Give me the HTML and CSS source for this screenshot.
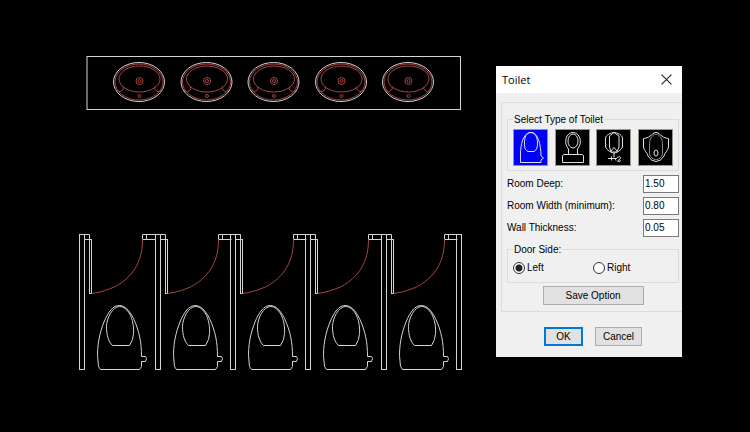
FILE: index.html
```html
<!DOCTYPE html>
<html lang="en">
<head>
<meta charset="utf-8">
<title>Toilet</title>
<link rel="stylesheet" href="styles.css">
</head>
<body>
<main class="workspace">
  <svg class="drawing" viewBox="0 0 488 432" role="img" aria-label="Floor plan">
    <defs>
      <g id="basin">
        <ellipse cx="0" cy="0" rx="25.5" ry="19.5"/>
        <g class="red">
          <ellipse cx="0" cy="0" rx="24" ry="18"/>
          <ellipse cx="0.5" cy="-3" rx="20.5" ry="13"/>
          <path d="M-24 6.500Q-20 11 -17.500 9Q-14.500 7 -16 4.500M24 6.500Q20 11 17.500 9Q14.500 7 16 4.500"/>
          <circle cx="0.5" cy="-1" r="3.500"/>
          <circle cx="0.5" cy="-1" r="1.500"/>
          <circle cx="0.5" cy="14" r="1.500"/>
        </g>
      </g>
      <g id="wall"><rect x="0" y="0" width="5" height="135"/></g>
      <g id="stall">
        <use href="#wall"/>
        <path d="M5 0H10V5H5M63 0H76M63 5H76M63 0V5M67 0V5"/>
        <rect x="10" y="5" width="2" height="54"/>
        <path class="red" d="M12 59C21 58 29 55 36 52C52 43 63 29 63 5"/>
        <path d="M18 121C18 105 22 93 26 84C31 74 35 71 40 71C45 71 50 76 54 84C60 97 62 108 62 122H66L67 124L66 127H62V132L60 135H21L19 132Z"/>
        <path d="M40 72C33 72 27 84 27 92C27 101 29 107 33 111H50Q54 105 54 99C55 84 48 72 40 72Z"/>
      </g>
    </defs>
    <rect x="87" y="56.500" width="373.500" height="53"/>
    <use href="#basin" x="139" y="82"/>
    <use href="#basin" x="206.500" y="82"/>
    <use href="#basin" x="273.500" y="82"/>
    <use href="#basin" x="341" y="82"/>
    <use href="#basin" x="408" y="82"/>
    <use href="#stall" x="79.500" y="234.500"/>
    <use href="#stall" x="155.500" y="234.500"/>
    <use href="#stall" x="230.500" y="234.500"/>
    <use href="#stall" x="305.500" y="234.500"/>
    <use href="#stall" x="381.500" y="234.500"/>
    <use href="#wall" x="456.500" y="234.500"/>
  </svg>

  <form class="dialog" aria-labelledby="dialog-title">
    <header class="titlebar">
      <h1 id="dialog-title">Toilet</h1>
      <button class="close" type="button" aria-label="Close">
        <svg viewBox="0 0 10 10"><path d="M.5 .5L9.500 9.500M9.500 .5L.5 9.500"/></svg>
      </button>
    </header>

    <div class="panel">
      <fieldset class="types">
        <legend>Select Type of Toilet</legend>
        <div class="tiles">
          <button class="tile selected" type="button" aria-label="Toilet with side handle">
            <svg viewBox="0 0 33 35"><path d="M6.500 32.500V24C6.500 15 9 2.500 17 2.500C24 2.500 27 15 27 26L29.500 28L27 30V32.500Z"/><path d="M17 2.500C12 2.500 10.500 7 10.500 13C10.500 18 11 20 14 21.500H20C23 20 23.500 17 23.500 13C23.500 7 21 2.500 17 2.500Z"/></svg>
          </button>
          <button class="tile" type="button" aria-label="Toilet with tank">
            <svg viewBox="0 0 33 35"><path d="M6.500 32.500V25.500L8 24.500H26L27.500 25.500V32.500Z"/><path d="M12.500 24.500V19C7 13 10 2.500 17 2.500C24 2.500 27 13 21.500 19V24.500"/><ellipse cx="17" cy="11" rx="5" ry="7"/></svg>
          </button>
          <button class="tile" type="button" aria-label="Wall urinal">
            <svg viewBox="0 0 33 35"><path d="M17 2.500C20 2.500 25 5 25.500 8V17C24 20 20 23 17 23C14 23 10 20 8.500 17V8C9 5 14 2.500 17 2.500Z"/><path d="M17 2.500L12.500 6V17L14 22H20L22 17V6ZM14 21L17 17.500L20 21M17 23V27.500M11 28.500H20M14.500 26.500V30.500M17.500 28L19 30.500M20 27.500Q24 25.500 23.500 28.500L20.500 31Q23 33 23.500 30"/></svg>
          </button>
          <button class="tile" type="button" aria-label="Shield urinal">
            <svg viewBox="0 0 33 35"><path d="M17 2.500C14 2.500 13 5 11 6C9 8 7 8 4.500 8.500V17C5 21 8 22 9 26Q12 31.500 17 31.500T25 26C26 22 29 21 29.500 17V8.500C27 8 25 8 23 6C21 5 20 2.500 17 2.500Z"/><path class="dim" d="M17 4C12 5 10.500 10 10.500 15V24Q12 29.500 17 29.500T23.500 24V15C23.500 10 22 5 17 4Z"/><ellipse cx="17" cy="23" rx="2" ry="3"/></svg>
          </button>
        </div>
      </fieldset>

      <div class="fields">
        <label for="deep">Room Deep:</label><input id="deep" type="text" value="1.50">
        <label for="width">Room Width (minimum):</label><input id="width" type="text" value="0.80">
        <label for="thickness">Wall Thickness:</label><input id="thickness" type="text" value="0.05">
      </div>

      <fieldset class="side">
        <legend>Door Side:</legend>
        <div class="choices">
          <label><input type="radio" name="side" checked>Left</label>
          <label><input type="radio" name="side">Right</label>
        </div>
      </fieldset>

      <button class="button save" type="button">Save Option</button>
    </div>

    <footer class="actions">
      <button class="button ok" type="submit">OK</button>
      <button class="button cancel" type="button">Cancel</button>
    </footer>
  </form>
</main>
</body>
</html>
```
FILE: styles.css
```css
* { box-sizing: border-box; }

body {
  margin: 0;
  background: #000;
  color: #000;
  font: 10px/13px "Liberation Sans", Arial, sans-serif;
}

button, input { font: inherit; color: inherit; }

.workspace {
  display: flex;
  align-items: flex-start;
  gap: 8px;
  padding-right: 68px;
  min-height: 100vh;
}

.drawing {
  flex: 1;
  min-width: 0;
  fill: none;
  stroke: #d4d4d4;
  stroke-width: 1;
}

.drawing .red { stroke: #a34545; }

.dialog {
  flex: none;
  width: 186px;
  margin-top: 66px;
  padding-bottom: 11px;
  background: #f0f0f0;
}

.titlebar {
  display: flex;
  align-items: center;
  justify-content: space-between;
  height: 27px;
  padding: 0 10px 0 6px;
  background: #fff;
}

.titlebar h1 {
  margin: 0;
  font: 11px/16px "Open Sans", "Noto Sans", sans-serif;
}

.close {
  width: 11px;
  height: 11px;
  padding: 0;
  border: 0;
  background: none;
}

.close svg { display: block; width: 100%; fill: none; stroke: #222; }

.panel {
  margin: 9px 0 0 5px;
  padding: 10px 3px 6px 5px;
  border: 1px solid #dcdcdc;
  border-right: 0;
}

fieldset {
  min-width: 0;
  margin: 0;
  padding: 0 5px;
  border: 1px solid #dcdcdc;
}

legend { padding: 0 1px; }

.types { padding-bottom: 4px; }

.tiles {
  display: flex;
  justify-content: space-between;
  padding-top: 3px;
}

.tile {
  width: 35px;
  height: 37px;
  padding: 0;
  border: 1px solid #96968a;
  background: #000;
}

.tile.selected { background: #00f; }

.tile svg { display: block; width: 100%; fill: none; stroke: #e0e0e0; }
.tile .dim { stroke: #888; }

.fields {
  display: grid;
  grid-template-columns: 1fr 36px;
  align-items: center;
  row-gap: 4px;
  margin: 4px 0 6px;
}

.fields label { padding-bottom: 2px; }

.fields input {
  width: 100%;
  height: 18px;
  padding: 0 1px 2px;
  border: 1px solid #7a7a7a;
  background: #fff;
}

.choices {
  display: grid;
  grid-template-columns: 1fr 1fr;
  padding: 5px 0 8px;
}

.choices label { display: flex; align-items: center; gap: 2px; }

.choices input {
  appearance: none;
  width: 12px;
  height: 12px;
  margin: 0;
  border: 1px solid #333;
  border-radius: 50%;
  background: #fff;
}

.choices input:checked { background: radial-gradient(circle, #222 3px, #fff 4px); }

.button {
  height: 19px;
  padding: 0;
  border: 1px solid #adadad;
  background: #e1e1e1;
}

.save { display: block; width: 101px; margin: 3px auto 0; }

.actions {
  display: flex;
  justify-content: center;
  gap: 12px;
  margin-top: 15px;
  padding-left: 8px;
}

.ok { width: 39px; border: 2px solid #0078d7; }
.cancel { width: 47px; }
```
